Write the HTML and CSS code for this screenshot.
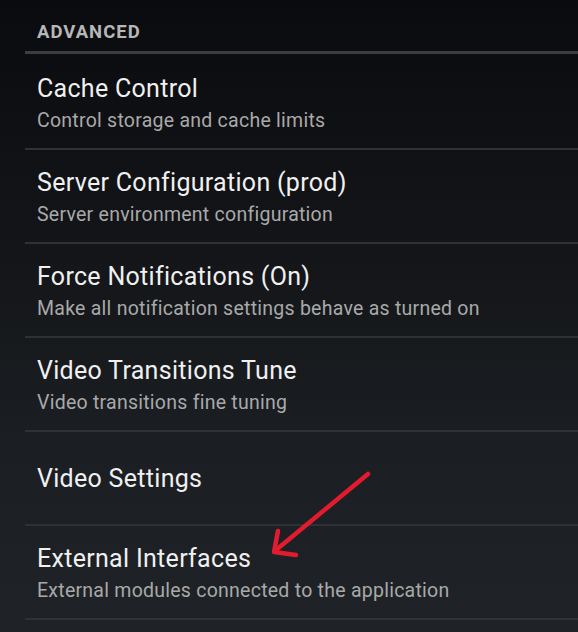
FILE: index.html
```html
<!DOCTYPE html>
<html>
<head>
<meta charset="utf-8">
<link rel="stylesheet" href="styles.css">
</head>
<body>
<div class="screen">
  <div class="list">
    <div class="header">ADVANCED</div>
    <div class="items">
      <div class="row">
        <div class="title">Cache Control</div>
        <div class="sub">Control storage and cache limits</div>
      </div>
      <div class="row">
        <div class="title">Server Configuration (prod)</div>
        <div class="sub">Server environment configuration</div>
      </div>
      <div class="row">
        <div class="title">Force Notifications (On)</div>
        <div class="sub">Make all notification settings behave as turned on</div>
      </div>
      <div class="row">
        <div class="title">Video Transitions Tune</div>
        <div class="sub">Video transitions fine tuning</div>
      </div>
      <div class="row">
        <div class="title">Video Settings</div>
      </div>
      <div class="row">
        <div class="title">External Interfaces</div>
        <div class="sub">External modules connected to the application</div>
      </div>
    </div>
  </div>
  <svg class="arrow" width="578" height="632" viewBox="0 0 578 632">
    <g fill="none" stroke="#e31b2e" stroke-width="4.5" stroke-linecap="round" stroke-linejoin="round">
      <path d="M368 474 L276 550"/>
      <path d="M278 531 L274 552 L296 555"/>
    </g>
  </svg>
</div>
</body>
</html>
```
FILE: styles.css
```css
html, body {
  margin: 0;
  padding: 0;
}
body {
  width: 578px;
  height: 632px;
  overflow: hidden;
  background: linear-gradient(to bottom, #0a0b0e 0%, #121417 35%, #1b1e22 70%, #1f2327 100%);
  font-family: Roboto, "Noto Sans", sans-serif;
}
.screen {
  position: relative;
  width: 578px;
  height: 632px;
}
.list {
  padding-left: 25px;
}
.header {
  box-sizing: border-box;
  height: 54px;
  padding: 20px 0 0 12px;
  border-bottom: 3px solid #3b3d41;
  color: #b7b7b7;
  font-weight: 700;
  font-size: 18.5px;
  letter-spacing: 1px;
  line-height: 24px;
}
.items {
  padding-top: 2px;
}
.row {
  box-sizing: border-box;
  height: 94px;
  border-bottom: 2px solid #2f3235;
  padding: 2px 0 0 12px;
  display: flex;
  flex-direction: column;
  justify-content: center;
  gap: 6px;
}
.title {
  color: #f0f0f0;
  font-size: 25px;
  letter-spacing: 0.3px;
  line-height: 30px;
}
.sub {
  color: #a9a9a9;
  font-size: 19.5px;
  letter-spacing: 0.25px;
  line-height: 22px;
}
.arrow {
  position: absolute;
  left: 0;
  top: 0;
}
```
